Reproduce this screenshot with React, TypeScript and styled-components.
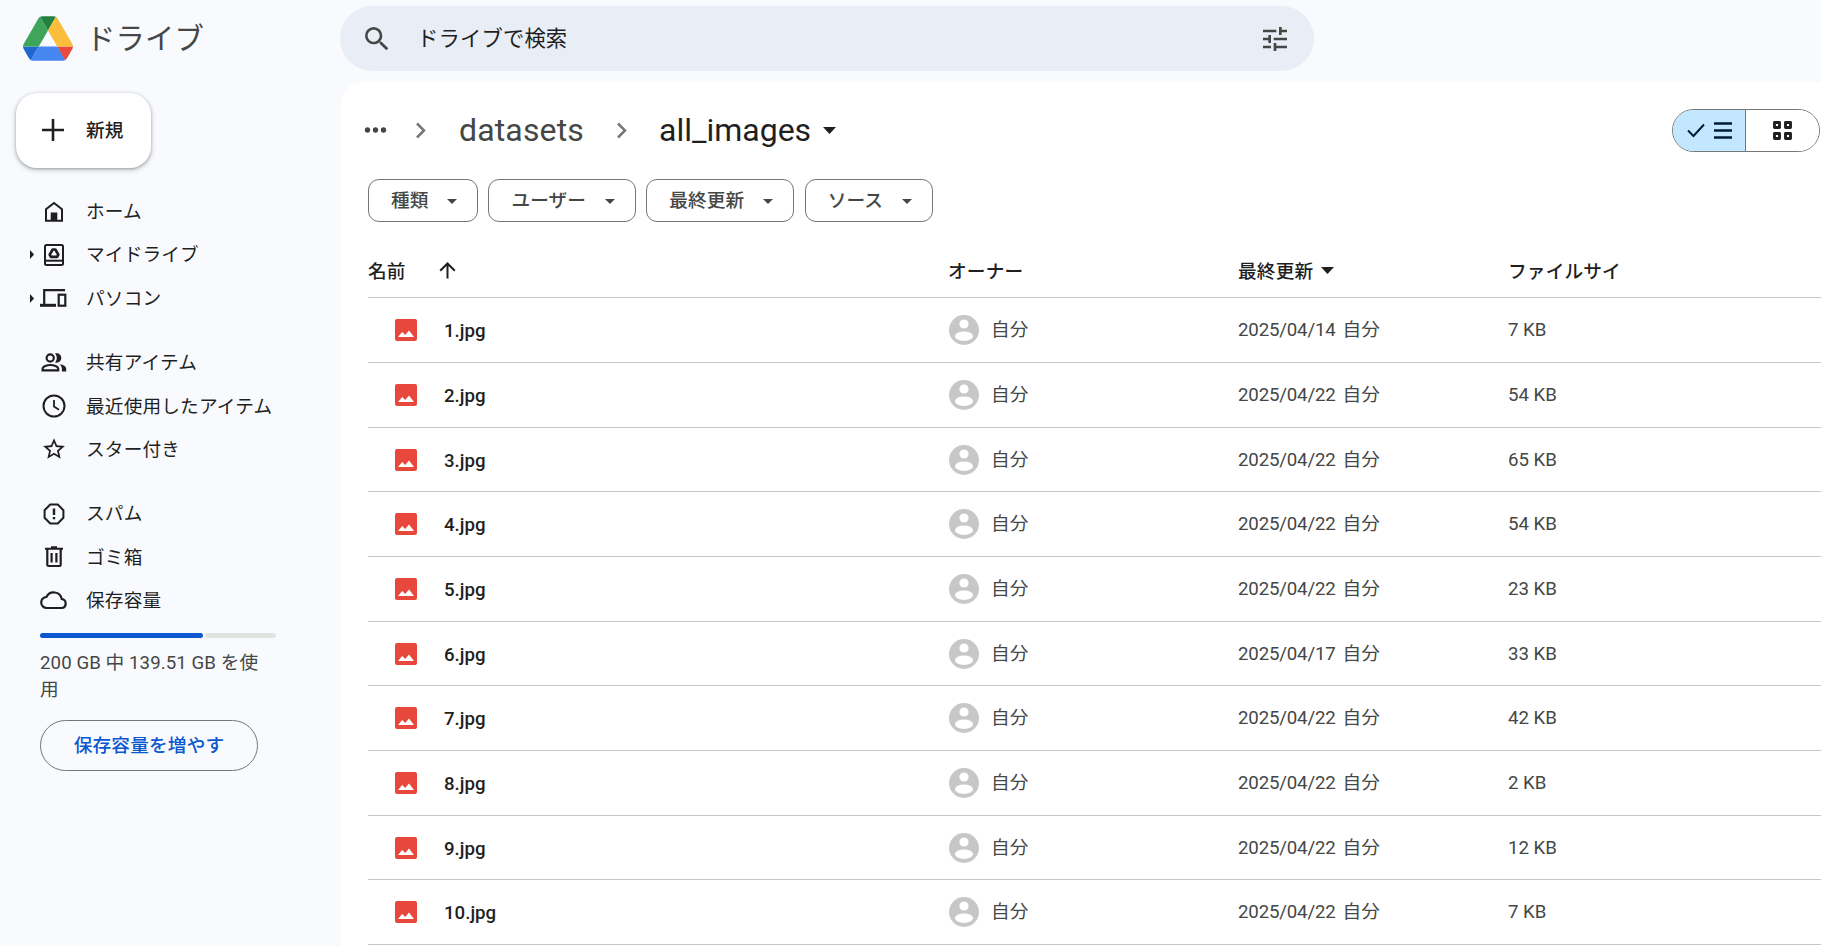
import React from "react";
import styled, { createGlobalStyle } from "styled-components";
import { MdSearch, MdTune } from "react-icons/md";

const ink = "#1f1f1f";
const muted = "#444746";
const outline = "#747775";

const GlobalStyle = createGlobalStyle`
  *, *::before, *::after { box-sizing: border-box; }
  body {
    margin: 0;
    overflow: hidden;
    background: #f8fafd;
    color: ${ink};
    font-family: Roboto, "Noto Sans CJK JP", sans-serif;
    font-size: 18.67px;
  }
  button { font: inherit; color: inherit; background: none; border: 0; padding: 0; }
  svg { display: block; flex: none; }
`;

const Page = styled.div`
  display: grid;
  grid-template: 82px 864px / 341px 1480px;
  width: 1821px;
  height: 946px;
  background: #f8fafd;
`;

const Brand = styled.div`
  display: flex;
  align-items: center;
  gap: 13px;
  padding: 0 0 5px 23px;
`;

const BrandName = styled.span`
  font-size: 29.33px;
  line-height: 40px;
  letter-spacing: 0.2px;
  color: ${muted};
`;

const TopBar = styled.header`
  padding: 6px 0 0;
  margin-left: -1px;
`;

const SearchBox = styled.div`
  display: flex;
  align-items: center;
  width: 974px;
  height: 65px;
  padding: 0 23.5px 0 21px;
  border-radius: 33px;
  background: #e9eef6;
  color: ${muted};
`;

const SearchText = styled.span`
  flex: 1;
  margin: 1px 0 0 24px;
  font-size: 21.33px;
  line-height: 30px;
  letter-spacing: 0.15px;
  color: ${ink};
`;

const Sidebar = styled.nav`
  display: flex;
  flex-direction: column;
  align-items: flex-start;
  padding-top: 11px;
`;

const NewButton = styled.button`
  display: flex;
  align-items: center;
  gap: 22px;
  width: 135px;
  height: 75px;
  margin: 0 0 22px 16px;
  padding: 0 0 1px 26px;
  border-radius: 21px;
  background: #fff;
  font-weight: 500;
  box-shadow: 0 1px 3px rgba(60, 64, 67, 0.4), 0 2px 5px 1px rgba(60, 64, 67, 0.16);
`;

const NewLabel = styled.span`
  margin-bottom: 3px;
`;

const NavGroup = styled.div`
  display: flex;
  flex-direction: column;
  margin-bottom: 21.2px;
`;

const NavItem = styled.div`
  display: flex;
  align-items: center;
  height: 43.3px;
  padding-left: 29px;
`;

const ExpandSlot = styled.span`
  width: 8px;
`;

const IconSlot = styled.span`
  display: flex;
  justify-content: center;
  width: 33px;
`;

const NavLabel = styled.span`
  margin: 2px 0 0 16px;
  line-height: 27px;
  letter-spacing: 0.16px;
`;

const Storage = styled.section`
  margin: -10px 0 0 40px;
`;

const Meter = styled.div`
  display: flex;
  gap: 2px;
  width: 236px;
  height: 5px;
`;

const MeterPart = styled.div<{ $color: string; $grow: number }>`
  flex: ${(p) => p.$grow} 1 0;
  border-radius: 3px;
  background: ${(p) => p.$color};
`;

const StorageText = styled.p`
  width: 222px;
  margin: 12px 0 0;
  line-height: 26.67px;
  letter-spacing: 0.08px;
  color: ${muted};
`;

const StorageButton = styled.button`
  width: 218px;
  height: 51px;
  margin-top: 16px;
  padding-bottom: 3px;
  border: 1px solid ${outline};
  border-radius: 26px;
  color: #0b57d0;
  font-weight: 500;
  letter-spacing: 0.16px;
`;

const Main = styled.main`
  padding: 25px 0 0 23px;
  border-top-left-radius: 21px;
  background: #fff;
  overflow: hidden;
`;

const TitleRow = styled.div`
  display: flex;
  align-items: center;
  height: 46px;
`;

const Crumb = styled.span<{ $current?: boolean; $width: number }>`
  width: ${(p) => p.$width}px;
  font-size: 32px;
  line-height: 46px;
  letter-spacing: ${(p) => (p.$current ? 0 : 0.15)}px;
  white-space: nowrap;
  color: ${(p) => (p.$current ? ink : muted)};
`;

const CrumbArrow = styled.span<{ $before: number; $after: number }>`
  padding: 0 ${(p) => p.$after}px 0 ${(p) => p.$before}px;
`;

const ViewSwitch = styled.div`
  display: flex;
  width: 148px;
  height: 43px;
  margin: 0 1px 0 auto;
  border: 1px solid ${outline};
  border-radius: 22px;
  overflow: hidden;
`;

const ViewOption = styled.button<{ $active?: boolean }>`
  display: flex;
  flex: ${(p) => (p.$active ? "0 0 73px" : "1")};
  align-items: center;
  justify-content: center;
  gap: 9px;
  color: ${(p) => (p.$active ? "#001d35" : ink)};
  background: ${(p) => (p.$active ? "#c2e7ff" : "#fff")};
  border-right: ${(p) => (p.$active ? `1px solid ${outline}` : "0")};
`;

const Filters = styled.div`
  display: flex;
  gap: 10.4px;
  margin: 26px 0 0 4px;
`;

const FilterChip = styled.button<{ $width: number }>`
  display: flex;
  align-items: center;
  justify-content: space-between;
  width: ${(p) => p.$width}px;
  height: 43px;
  padding: 1px 20px 0 22px;
  border: 1px solid ${outline};
  border-radius: 11px;
  color: ${muted};
  font-weight: 500;
  line-height: 27px;
  letter-spacing: 0.12px;
`;

const Table = styled.div`
  margin-left: 4px;
`;

const Line = styled.div`
  display: grid;
  grid-template-columns: 580px 290px 270px 1fr;
  align-items: center;
  height: 64.68px;
  border-bottom: 1px solid #c7c7c7;
  color: ${muted};
`;

const HeadLine = styled(Line)`
  height: 76.45px;
  padding-top: 22px;
  color: ${ink};
  font-weight: 500;
`;

const HeadCell = styled.div<{ $gap?: number }>`
  display: flex;
  align-items: center;
  gap: ${(p) => p.$gap ?? 0}px;
`;

const HeadLabel = styled.span`
  margin-top: 3px;
  line-height: 27px;
  letter-spacing: 0.16px;
`;

const NameCell = styled.div`
  display: flex;
  align-items: center;
  gap: 27px;
  padding-left: 27px;
  color: ${ink};
  font-weight: 500;
`;

const FileName = styled.span`
  margin-top: 2px;
`;

const OwnerCell = styled.div`
  display: flex;
  align-items: center;
  gap: 12px;
  padding-left: 1px;
`;

const TextCell = styled.span`
  margin-top: 1px;
  line-height: 27px;
`;

const DateText = styled.span`
  margin-right: 7px;
  letter-spacing: -0.17px;
`;

const Caret = ({ w = 10, h = 5 }: { w?: number; h?: number }) => (
  <svg width={w} height={h} viewBox="0 0 10 5" preserveAspectRatio="none"><path d="M0 0h10L5 5z" fill="currentColor" /></svg>
);

const Expand = () => (
  <svg width="5" height="9" viewBox="0 0 5 9"><path d="M1 0v9l4-4.500z" fill={ink} /></svg>
);

const DriveLogo = () => (
  <svg width="50" height="45" viewBox="0 0 87.3 78">
    <path d="m6.6 66.85 3.85 6.65c.8 1.4 1.95 2.5 3.3 3.3l13.75-23.8h-27.5c0 1.55.4 3.1 1.2 4.500z" fill="#1f67cf" />
    <path d="m43.65 25-13.75-23.8c-1.35.8-2.5 1.9-3.3 3.3l-25.4 44a9.06 9.06 0 0 0-1.2 4.500h27.500z" fill="#3ea55b" />
    <path d="m73.55 76.8c1.350-.8 2.500-1.900 3.300-3.300l1.600-2.750 7.650-13.250c.8-1.400 1.200-2.950 1.200-4.500h-27.500l5.850 11.500z" fill="#e94a3d" />
    <path d="m43.65 25 13.750-23.800c-1.350-.8-2.900-1.200-4.500-1.200h-18.500c-1.600 0-3.150.450-4.500 1.200z" fill="#24803f" />
    <path d="m59.800 53h-32.300l-13.750 23.800c1.350.8 2.900 1.200 4.500 1.200h50.800c1.600 0 3.150-.450 4.500-1.200z" fill="#4686f1" />
    <path d="m73.400 26.500-12.700-22c-.8-1.400-1.950-2.500-3.300-3.300l-13.750 23.800 16.150 28h27.450c0-1.550-.4-3.100-1.200-4.500z" fill="#fbbd3c" />
  </svg>
);

const stroke = { fill: "none", stroke: "currentColor", strokeWidth: 2 };

const HomeIcon = () => (
  <svg width="20" height="22" viewBox="0 0 20 22">
    <path d="M2 19.800V8.200L10 2l8 6.200v11.600z" {...stroke} />
    <path d="M6.700 11.500h6.600V20H6.700z" fill="currentColor" />
  </svg>
);
const MyDriveIcon = () => (
  <svg width="22" height="24" viewBox="0 0 22 24">
    <rect x="2" y="2" width="18" height="20" rx="1.500" {...stroke} />
    <path d="M2 17.700h18" {...stroke} />
    <path d="M9.700 6.500h2.600l3 5.200-1.200 2.200H7.900l-1.200-2.200z" {...stroke} strokeWidth="2.700" strokeLinejoin="round" />
  </svg>
);
const ComputersIcon = () => (
  <svg width="27" height="20" viewBox="0 0 27 20">
    <path d="M4.200 17V2.200H25" {...stroke} strokeWidth="2.200" />
    <path d="M0 15.800h16v3H0z" fill="currentColor" />
    <rect x="18.700" y="6.700" width="6.600" height="11" {...stroke} strokeWidth="2.200" />
  </svg>
);
const SharedIcon = () => (
  <svg width="26" height="19" viewBox="0 0 26 19">
    <circle cx="9.200" cy="5" r="3.600" {...stroke} strokeWidth="2.200" />
    <path d="M1.600 17.400v-1.700c0-2.500 4.600-3.700 7.800-3.700s7.800 1.200 7.800 3.700v1.700z" {...stroke} strokeWidth="2.200" />
    <path d="M14 .5c3.600-.9 6.300 1.500 6.300 4.500S17.600 10.400 14 9.500C16.400 6.800 16.400 3.200 14 .5z" fill="currentColor" />
    <path d="M18.500 11.200c3.800.5 6.700 2 6.700 4.600v2.700h-4.300v-2.700c0-1.900-.9-3.400-2.400-4.600z" fill="currentColor" />
  </svg>
);
const ClockIcon = () => (
  <svg width="24" height="24" viewBox="0 0 24 24">
    <circle cx="12" cy="12" r="10.500" {...stroke} />
    <path d="M12 6v6.500l5 3.200" {...stroke} strokeWidth="1.800" />
  </svg>
);
const StarIcon = () => (
  <svg width="26" height="26" viewBox="0 0 24 24">
    <path d="m22 9.240-7.190-.620L12 2 9.190 8.630 2 9.240l5.460 4.730L5.820 21 12 17.270 18.180 21l-1.630-7.030L22 9.240zM12 15.400l-3.760 2.270 1-4.280-3.320-2.880 4.380-.380L12 6.100l1.710 4.040 4.380.380-3.320 2.880 1 4.280L12 15.400z" fill="currentColor" />
  </svg>
);
const SpamIcon = () => (
  <svg width="22" height="22" viewBox="0 0 22 22">
    <path d="M7.200 1.600h7.600l5.600 5.600v7.600l-5.600 5.600H7.200l-5.600-5.600V7.200z" {...stroke} />
    <path d="M11 5.500v6.500M11 14v2.300" {...stroke} strokeWidth="2.400" />
  </svg>
);
const TrashIcon = () => (
  <svg width="20" height="22" viewBox="0 0 20 22">
    <path d="M1 2.700h18M7 1.300h6" {...stroke} />
    <path d="M3.300 3v15.800q0 1.200 1.200 1.200h11q1.200 0 1.200-1.200V3M7.600 7v9.500M12.400 7v9.500" {...stroke} strokeWidth="2.200" />
  </svg>
);
const CloudIcon = () => (
  <svg width="28" height="20" viewBox="0 0 28 20">
    <path d="M7 18a5.500 5.500 0 0 1-.6-11A8.200 8.200 0 0 1 21.800 9a4.600 4.600 0 0 1 .4 9z" {...stroke} strokeWidth="2.200" />
  </svg>
);
const ImageIcon = () => (
  <svg width="22" height="22" viewBox="0 0 22 22">
    <rect width="22" height="22" rx="2" fill="#e8483c" />
    <path d="M3 18l4.200-5 3 3L14 11.500 19 18z" fill="#fff" />
  </svg>
);
const Avatar = () => (
  <svg width="30" height="30" viewBox="0 0 30 30">
    <circle cx="15" cy="15" r="15" fill="#c7c7c7" />
    <circle cx="15" cy="9" r="4.600" fill="#fff" />
    <ellipse cx="15" cy="21.200" rx="9" ry="4.800" fill="#fff" />
  </svg>
);
const Chevron = () => (
  <svg width="11" height="17" viewBox="0 0 11 17"><path d="M2 1.500l7 7-7 7" fill="none" stroke={outline} strokeWidth="2.500" /></svg>
);
const Dots = () => (
  <svg width="23" height="6" viewBox="0 0 23 6" fill={muted}><circle cx="3.500" cy="3" r="2.700" /><circle cx="11.500" cy="3" r="2.700" /><circle cx="19.500" cy="3" r="2.700" /></svg>
);

const groups = [
  [
    { label: "ホーム", icon: <HomeIcon /> },
    { label: "マイドライブ", icon: <MyDriveIcon />, expandable: true },
    { label: "パソコン", icon: <ComputersIcon />, expandable: true },
  ],
  [
    { label: "共有アイテム", icon: <SharedIcon /> },
    { label: "最近使用したアイテム", icon: <ClockIcon /> },
    { label: "スター付き", icon: <StarIcon /> },
  ],
  [
    { label: "スパム", icon: <SpamIcon /> },
    { label: "ゴミ箱", icon: <TrashIcon /> },
    { label: "保存容量", icon: <CloudIcon /> },
  ],
];

const filters = [
  { label: "種類", width: 110 },
  { label: "ユーザー", width: 147.5 },
  { label: "最終更新", width: 148 },
  { label: "ソース", width: 128 },
];

const files = [
  ["1.jpg", "2025/04/14", "7 KB"],
  ["2.jpg", "2025/04/22", "54 KB"],
  ["3.jpg", "2025/04/22", "65 KB"],
  ["4.jpg", "2025/04/22", "54 KB"],
  ["5.jpg", "2025/04/22", "23 KB"],
  ["6.jpg", "2025/04/17", "33 KB"],
  ["7.jpg", "2025/04/22", "42 KB"],
  ["8.jpg", "2025/04/22", "2 KB"],
  ["9.jpg", "2025/04/22", "12 KB"],
  ["10.jpg", "2025/04/22", "7 KB"],
];

export default function App() {
  return (
    <Page>
      <GlobalStyle />
      <Brand>
        <DriveLogo />
        <BrandName>ドライブ</BrandName>
      </Brand>
      <TopBar>
        <SearchBox>
          <MdSearch size={32} />
          <SearchText>ドライブで検索</SearchText>
          <MdTune size={32} />
        </SearchBox>
      </TopBar>
      <Sidebar>
        <NewButton>
          <svg width="22" height="22" viewBox="0 0 22 22"><path d="M11 0v22M0 11h22" {...stroke} strokeWidth="2.600" /></svg>
          <NewLabel>新規</NewLabel>
        </NewButton>
        {groups.map((group, i) => (
          <NavGroup key={i}>
            {group.map((item: { label: string; icon: React.ReactNode; expandable?: boolean }) => (
              <NavItem key={item.label}>
                <ExpandSlot>{item.expandable && <Expand />}</ExpandSlot>
                <IconSlot>{item.icon}</IconSlot>
                <NavLabel>{item.label}</NavLabel>
              </NavItem>
            ))}
          </NavGroup>
        ))}
        <Storage>
          <Meter>
            <MeterPart $color="#0b57d0" $grow={163} />
            <MeterPart $color="#e1e3e1" $grow={71} />
          </Meter>
          <StorageText>200 GB 中 139.51 GB を使用</StorageText>
          <StorageButton>保存容量を増やす</StorageButton>
        </Storage>
      </Sidebar>
      <Main>
        <TitleRow>
          <Dots />
          <CrumbArrow $before={28} $after={33}><Chevron /></CrumbArrow>
          <Crumb $width={125}>datasets</Crumb>
          <CrumbArrow $before={32} $after={32}><Chevron /></CrumbArrow>
          <Crumb $current $width={164}>all_images</Crumb>
          <Caret w={13} h={7} />
          <ViewSwitch>
            <ViewOption $active>
              <svg width="18" height="15" viewBox="0 0 18 15"><path d="M1 7.500l5.500 5.500L17 1.500" {...stroke} /></svg>
              <svg width="18" height="17" viewBox="0 0 18 17"><path d="M0 1.500h18M0 8.500h18M0 15.500h18" {...stroke} strokeWidth="2.400" /></svg>
            </ViewOption>
            <ViewOption>
              <svg width="19" height="19" viewBox="0 0 19 19"><path d="M1.500 1.500h5v5h-5zM12.500 1.500h5v5h-5zM1.500 12.500h5v5h-5zM12.500 12.500h5v5h-5z" {...stroke} strokeWidth="2.900" strokeLinejoin="round" /></svg>
            </ViewOption>
          </ViewSwitch>
        </TitleRow>
        <Filters>
          {filters.map((f) => (
            <FilterChip key={f.label} $width={f.width}>{f.label}<Caret /></FilterChip>
          ))}
        </Filters>
        <Table>
          <HeadLine>
            <HeadCell $gap={33}>
              <HeadLabel>名前</HeadLabel>
              <svg width="17" height="17" viewBox="0 0 17 17"><path d="M8.500 16.500V2M1.200 8.800l7.300-7.300 7.300 7.300" {...stroke} /></svg>
            </HeadCell>
            <HeadCell><HeadLabel>オーナー</HeadLabel></HeadCell>
            <HeadCell $gap={8}><HeadLabel>最終更新</HeadLabel><Caret w={13} h={7} /></HeadCell>
            <HeadCell><HeadLabel>ファイルサイ</HeadLabel></HeadCell>
          </HeadLine>
          {files.map(([name, date, size]) => (
            <Line key={name}>
              <NameCell><ImageIcon /><FileName>{name}</FileName></NameCell>
              <OwnerCell><Avatar /><TextCell>自分</TextCell></OwnerCell>
              <TextCell><DateText>{date}</DateText>自分</TextCell>
              <TextCell>{size}</TextCell>
            </Line>
          ))}
        </Table>
      </Main>
    </Page>
  );
}
